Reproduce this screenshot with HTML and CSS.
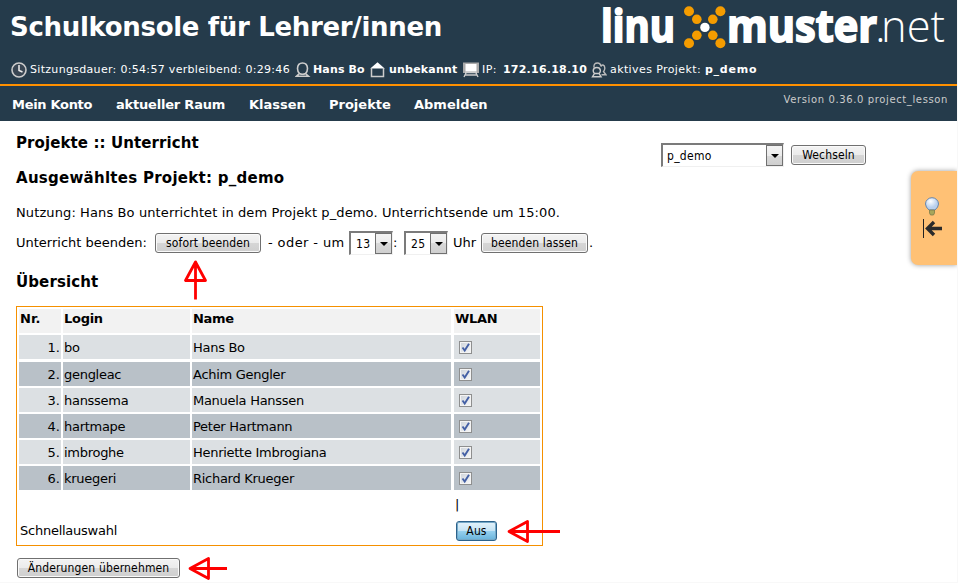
FILE: index.html
```html
<!DOCTYPE html>
<html lang="de">
<head>
<meta charset="utf-8">
<title>Schulkonsole</title>
<link rel="stylesheet" href="styles.css">
</head>
<body>
<div class="page">
  <header class="header">
    <div class="brand">
      <h1>Schulkonsole für Lehrer/innen</h1>
      <svg class="logo" width="350" height="54" viewBox="600 0 350 54">
        <g class="logo-bold">
          <text x="601" y="42" textLength="74" lengthAdjust="spacingAndGlyphs">linu</text>
          <text x="727" y="42" textLength="150" lengthAdjust="spacingAndGlyphs">muster</text>
        </g>
        <g class="logo-light">
          <text x="875" y="42">.</text>
          <text x="881" y="42" textLength="64" lengthAdjust="spacingAndGlyphs">net</text>
        </g>
        <g fill="#f59c00">
          <circle cx="689" cy="11.2" r="5"/><circle cx="696.8" cy="19.3" r="4.8"/>
          <circle cx="720.4" cy="11.2" r="5"/><circle cx="712.8" cy="19.3" r="4.8"/>
          <circle cx="696.8" cy="35.3" r="4.8"/><circle cx="689" cy="43.3" r="5"/>
          <circle cx="712.8" cy="35.3" r="4.8"/><circle cx="720.4" cy="43.3" r="5"/>
        </g>
        <circle cx="704.9" cy="27.4" r="4.7" fill="#fff"/>
      </svg>
    </div>
    <div class="status">
      <svg class="ico i-clock" width="16" height="16" viewBox="0 0 16 16"><circle cx="8" cy="8" r="7" fill="#394653" stroke="#ccc" stroke-width="1.6"/><path d="M8 3v5.500l3.500 1.500" fill="none" stroke="#eee" stroke-width="1.5"/></svg>
      <span class="s-time">Sitzungsdauer: 0:54:57 verbleibend: 0:29:46</span>
      <svg class="ico" width="16" height="16" viewBox="0 0 16 16"><path d="M4.500 11.500Q2.500 9.500 2.500 6.500Q2.700 1 7.500 1T12.500 6.500Q12.500 9.500 10.500 11.500Q9 12.300 7.500 12.300T4.500 11.500L1.500 14.300H13.500L10.500 11.500" fill="none" stroke="#ccc" stroke-width="1.6"/></svg>
      <b class="s-user">Hans Bo</b>
      <svg class="ico" width="16" height="16" viewBox="0 0 16 16"><path d="M.3 6.500L7.500 .3L14.700 6.500Z" fill="#fff"/><path d="M1.500 6v8.500H13.500V6" fill="none" stroke="#ccc" stroke-width="1.5"/></svg>
      <b class="s-room">unbekannt</b>
      <svg class="ico" width="16" height="16" viewBox="0 0 16 16"><path d="M0 .5H16V11H0Z" fill="#aaa"/><path d="M2.500 2H13.500V9.500H2.500Z" fill="#fff"/><path d="M2 10.500H14M3 11L1 15M13 11L15 15M2 13H14" fill="none" stroke="#ccc" stroke-width="1.4"/></svg>
      <span class="s-ip">IP:</span>
      <b class="s-addr">172.16.18.10</b>
      <svg class="ico" width="16" height="16" viewBox="0 0 16 16"><path d="M3 5.500Q2.500 1 6.500 1Q9.500 1 10 4.500Q10.500 2.800 12 3Q14 3.500 13.800 6.500Q13.600 8.500 12.500 9.500L15 12.800H10.500" fill="none" stroke="#bbb" stroke-width="1.4"/><path d="M3.500 11.500Q2 10 2.200 8.300Q2.600 5.500 5.800 5.500T9.400 8.300Q9.600 10 8.100 11.500H3.500L1.500 14.800H10.100L8.100 11.500" fill="none" stroke="#ccc" stroke-width="1.4"/></svg>
      <span class="s-proj">aktives Projekt:</span>
      <b class="s-name">p_demo</b>
    </div>
  </header>
  <nav class="nav">
    <a class="n1">Mein Konto</a><a class="n2">aktueller Raum</a><a class="n3">Klassen</a><a class="n4">Projekte</a><a class="n5">Abmelden</a>
    <span class="version">Version 0.36.0 project_lesson</span>
  </nav>
  <main class="main">
    <section class="content">
      <h2 class="h-page">Projekte :: Unterricht</h2>
      <h2 class="h-project">Ausgewähltes Projekt: p_demo</h2>
      <p class="usage">Nutzung: Hans Bo unterrichtet in dem Projekt p_demo. Unterrichtsende um 15:00.</p>
      <div class="end-row">
        <span class="e-label">Unterricht beenden:</span>
        <button class="btn b-now">sofort beenden</button>
        <span class="e-or">- oder - um</span>
        <span class="select small"><span>13</span><i></i></span>
        <span class="e-colon">:</span>
        <span class="select small"><span>25</span><i></i></span>
        <span class="e-uhr">Uhr</span>
        <button class="btn b-let">beenden lassen</button>
        <span class="e-dot">.</span>
      </div>
      <h2 class="h-over">Übersicht</h2>
      <div class="table">
        <div class="row head"><b>Nr.</b><b>Login</b><b>Name</b><b>WLAN</b></div>
        <div class="row first"><span>1.</span><span>bo</span><span>Hans Bo</span><span><i class="check"><svg width="11" height="11" viewBox="0 0 11 11"><path d="M2.500 5.500L4.700 8.500L9 1.800"/></svg></i></span></div>
        <div class="row dark"><span>2.</span><span>gengleac</span><span>Achim Gengler</span><span><i class="check"><svg width="11" height="11" viewBox="0 0 11 11"><path d="M2.500 5.500L4.700 8.500L9 1.800"/></svg></i></span></div>
        <div class="row"><span>3.</span><span>hanssema</span><span>Manuela Hanssen</span><span><i class="check"><svg width="11" height="11" viewBox="0 0 11 11"><path d="M2.500 5.500L4.700 8.500L9 1.800"/></svg></i></span></div>
        <div class="row dark"><span>4.</span><span>hartmape</span><span>Peter Hartmann</span><span><i class="check"><svg width="11" height="11" viewBox="0 0 11 11"><path d="M2.500 5.500L4.700 8.500L9 1.800"/></svg></i></span></div>
        <div class="row"><span>5.</span><span>imbroghe</span><span>Henriette Imbrogiana</span><span><i class="check"><svg width="11" height="11" viewBox="0 0 11 11"><path d="M2.500 5.500L4.700 8.500L9 1.800"/></svg></i></span></div>
        <div class="row dark"><span>6.</span><span>kruegeri</span><span>Richard Krueger</span><span><i class="check"><svg width="11" height="11" viewBox="0 0 11 11"><path d="M2.500 5.500L4.700 8.500L9 1.800"/></svg></i></span></div>
        <div class="bar">|</div>
        <div class="quick"><span>Schnellauswahl</span><button class="btn b-off">Aus</button></div>
      </div>
      <button class="btn b-save">Änderungen übernehmen</button>
    </section>
    <form class="switch">
      <span class="select wide"><span>p_demo</span><i></i></span>
      <button type="button" class="btn b-switch">Wechseln</button>
    </form>
  </main>
  <aside class="tab">
    <svg width="20" height="42" viewBox="0 0 20 42">
      <defs><radialGradient id="bulb" cx=".4" cy=".3"><stop offset="0" stop-color="#fff"/><stop offset="1" stop-color="#b9d0ee"/></radialGradient></defs>
      <path d="M7 13Q3.500 10 3.500 7A6.500 6.300 0 0 1 16.500 7Q16.500 10 13 13Z" fill="url(#bulb)" stroke="#6585ad"/>
      <path d="M7.500 13H12.500V16L11.500 18H8.500L7.500 16Z" fill="#a7a65b" stroke="#7c7c4b" stroke-width=".8"/>
      <path d="M1.500 22V41" stroke="#222" stroke-width="1"/>
      <path d="M20 31.500H6M12 25L5.500 31.500L12 38" fill="none" stroke="#2b2b2b" stroke-width="3.400"/>
    </svg>
  </aside>
  <svg class="mark m-up" width="24" height="42" viewBox="0 0 24 42"><path d="M12.500 41.500V4L2.500 22.500H22.500L12.500 4"/></svg>
  <svg class="mark m-off" width="56" height="26" viewBox="0 0 56 26"><path d="M55 12.500H4L22.500 2.500V22.500L4 12.500"/></svg>
  <svg class="mark m-save" width="42" height="26" viewBox="0 0 42 26"><path d="M41 13.500H4L22.500 3.500V23.500L4 13.500"/></svg>
</div>
</body>
</html>
```
FILE: styles.css
```css
* { box-sizing: border-box; }
body {
  margin: 0;
  background: #f8f8f8;
  font: 13px/16px "DejaVu Sans", Verdana, sans-serif;
  color: #000;
  overflow: hidden;
}
.page { position: relative; width: 957px; height: 582px; background: #fff; }
h1, h2, p { margin: 0; white-space: nowrap; }
span, b, a { white-space: nowrap; }

.header { height: 86px; background: #253b4b; border-bottom: 2px solid #ff9000; color: #fff; }
.brand { display: flex; justify-content: space-between; height: 54px; padding: 0 7px 0 10px; }
h1 { font-size: 26px; line-height: 54px; width: 440px; letter-spacing: -.32px; }
.logo { overflow: visible; }
.logo-bold { font: 700 44px "Open Sans", sans-serif; fill: #fff; stroke: #fff; stroke-width: 1.9px; }
.logo-light { font: 300 45px "Open Sans", sans-serif; fill: #fff; }
.status { display: flex; align-items: center; height: 31px; padding-left: 11px; font-size: 11px; }
.ico { flex: none; }
.status span, .status b { flex: none; line-height: 18px; padding-top: 1px; }
.s-time { margin-left: 3px; width: 265px; letter-spacing: .31px; }
.s-user { margin-left: 2px; width: 57px; letter-spacing: .15px; }
.s-room { margin-left: 3px; width: 74px; letter-spacing: .2px; }
.s-ip { margin-left: 3px; width: 21px; letter-spacing: .4px; }
.s-addr { width: 88px; letter-spacing: .22px; }
.s-proj { margin-left: 3px; width: 95px; letter-spacing: .4px; }
.s-name { letter-spacing: .75px; }

.nav { display: flex; height: 35px; background: #253b4b; color: #fff; padding-left: 12px; font-weight: 700; line-height: 37px; }
.nav a { flex: none; }
.n1 { width: 104px; letter-spacing: -.3px; }
.n2 { width: 133px; letter-spacing: -.2px; }
.n3 { width: 80px; }
.n4 { width: 85px; }
.version { margin-left: auto; margin-right: 9px; font-size: 10px; font-weight: 400; line-height: 27px; letter-spacing: .62px; color: #ccc; }

.main { display: flex; justify-content: space-between; padding: 13px 91px 0 16px; }
.content { width: 580px; }
h2 { font-size: 15px; line-height: 18px; letter-spacing: .1px; }
.h-project { margin-top: 17px; letter-spacing: .27px; }
.usage { margin-top: 17px; line-height: 18px; letter-spacing: .11px; }
.end-row { display: flex; align-items: center; height: 24px; margin-top: 9px; }
.end-row > * { flex: none; }
.e-label { width: 139px; }
.e-or { margin-left: 7px; width: 81px; letter-spacing: .4px; }
.e-colon { width: 11px; }
.e-uhr { margin-left: 5px; width: 28px; }
.e-dot { margin-left: 1px; width: 6px; }
.h-over { margin-top: 18px; }

.btn {
  height: 20px;
  padding: 0;
  border: 1px solid #707070;
  border-radius: 3px;
  background: linear-gradient(#f3f3f3, #ebebeb 50%, #d6d6d6 50%, #cfcfcf);
  box-shadow: inset 0 0 0 1px #fafafa;
  font: 12px/18px "DejaVu Sans Condensed", "DejaVu Sans", sans-serif;
  font-stretch: condensed;
  letter-spacing: .15px;
  color: #000;
  white-space: nowrap;
}
.b-now { width: 106px; }
.b-let { width: 107px; }
.b-switch { width: 75px; }
.b-save { display: block; width: 163px; margin: 12px 0 0 1px; }
.b-off {
  width: 41px;
  border-color: #2c628b;
  background: linear-gradient(#e5f3fb, #c4e3f4 50%, #98d1ef 50%, #68b3db);
  box-shadow: inset 0 0 0 1px #75a9c8;
}

.select {
  display: flex;
  justify-content: space-between;
  height: 24px;
  padding-left: 4px;
  border: solid;
  border-width: 2px 1px 1px 2px;
  border-color: #7b7b7b #f0f0f0 #f0f0f0 #7b7b7b;
  background: #fff;
  font: 12px/22px "DejaVu Sans Condensed", "DejaVu Sans", sans-serif;
  font-stretch: condensed;
  letter-spacing: .3px;
}
.select.small { width: 44px; padding-left: 5px; }
.select.wide { width: 123px; }
.select i {
  display: flex;
  align-items: center;
  justify-content: center;
  width: 17px;
  height: 21px;
  border: 1px solid #707070;
  background: linear-gradient(#f3f3f3, #ebebeb 50%, #d9d9d9 50%, #cfcfcf);
}
.select i::after { content: ""; border: 4px solid transparent; border-top-color: #000; border-bottom: 0; }
.switch { display: flex; gap: 7px; align-items: center; height: 24px; margin-top: 9px; }

.table { width: 527px; height: 240px; margin-top: 15px; padding: 2px; border: 1px solid #f59000; }
.row { display: grid; grid-template-columns: 42px 127px 259px 87px; column-gap: 2px; height: 24px; margin-bottom: 2px; line-height: 25px; letter-spacing: -.28px; }
.row.first { margin-bottom: 3px; }
.row > * { height: 24px; background: #dce0e3; padding-left: 1px; }
.row.dark > * { background: #b9c1c8; }
.row.head > * { background: #f2f2f2; line-height: 19px; }
.row > :first-child { text-align: right; padding-right: 1px; letter-spacing: 0; }
.row.head > :first-child { text-align: left; }
.row > :last-child { margin-left: 1px; }
.check { display: block; width: 13px; height: 13px; margin: 6px 0 0 4px; border: 1px solid #8e8f8f; background: linear-gradient(135deg, #cdd3da, #f8f8f8); box-shadow: inset 0 0 0 1px #f4f4f4; line-height: 0; }
.check path { fill: none; stroke: #4460a5; stroke-width: 1.9; }
.bar { height: 25px; padding-left: 436px; line-height: 25px; }
.quick { display: flex; align-items: center; justify-content: space-between; height: 26px; padding: 0 43px 0 1px; margin-top: 1px; letter-spacing: -.25px; }

.tab {
  position: absolute;
  right: 0;
  top: 171px;
  width: 46px;
  height: 94px;
  padding: 26px 0 0 11px;
  border-radius: 7px 0 0 7px;
  background: #ffc175;
  box-shadow: 0 0 5px #999;
  clip-path: inset(-8px 0 -8px -8px);
}
.mark { position: absolute; }
.mark path { fill: none; stroke: #f00; stroke-width: 2.8; stroke-linejoin: round; }
.m-up { left: 183px; top: 258px; }
.m-off { left: 505px; top: 519px; }
.m-save { left: 186px; top: 555px; }
```
